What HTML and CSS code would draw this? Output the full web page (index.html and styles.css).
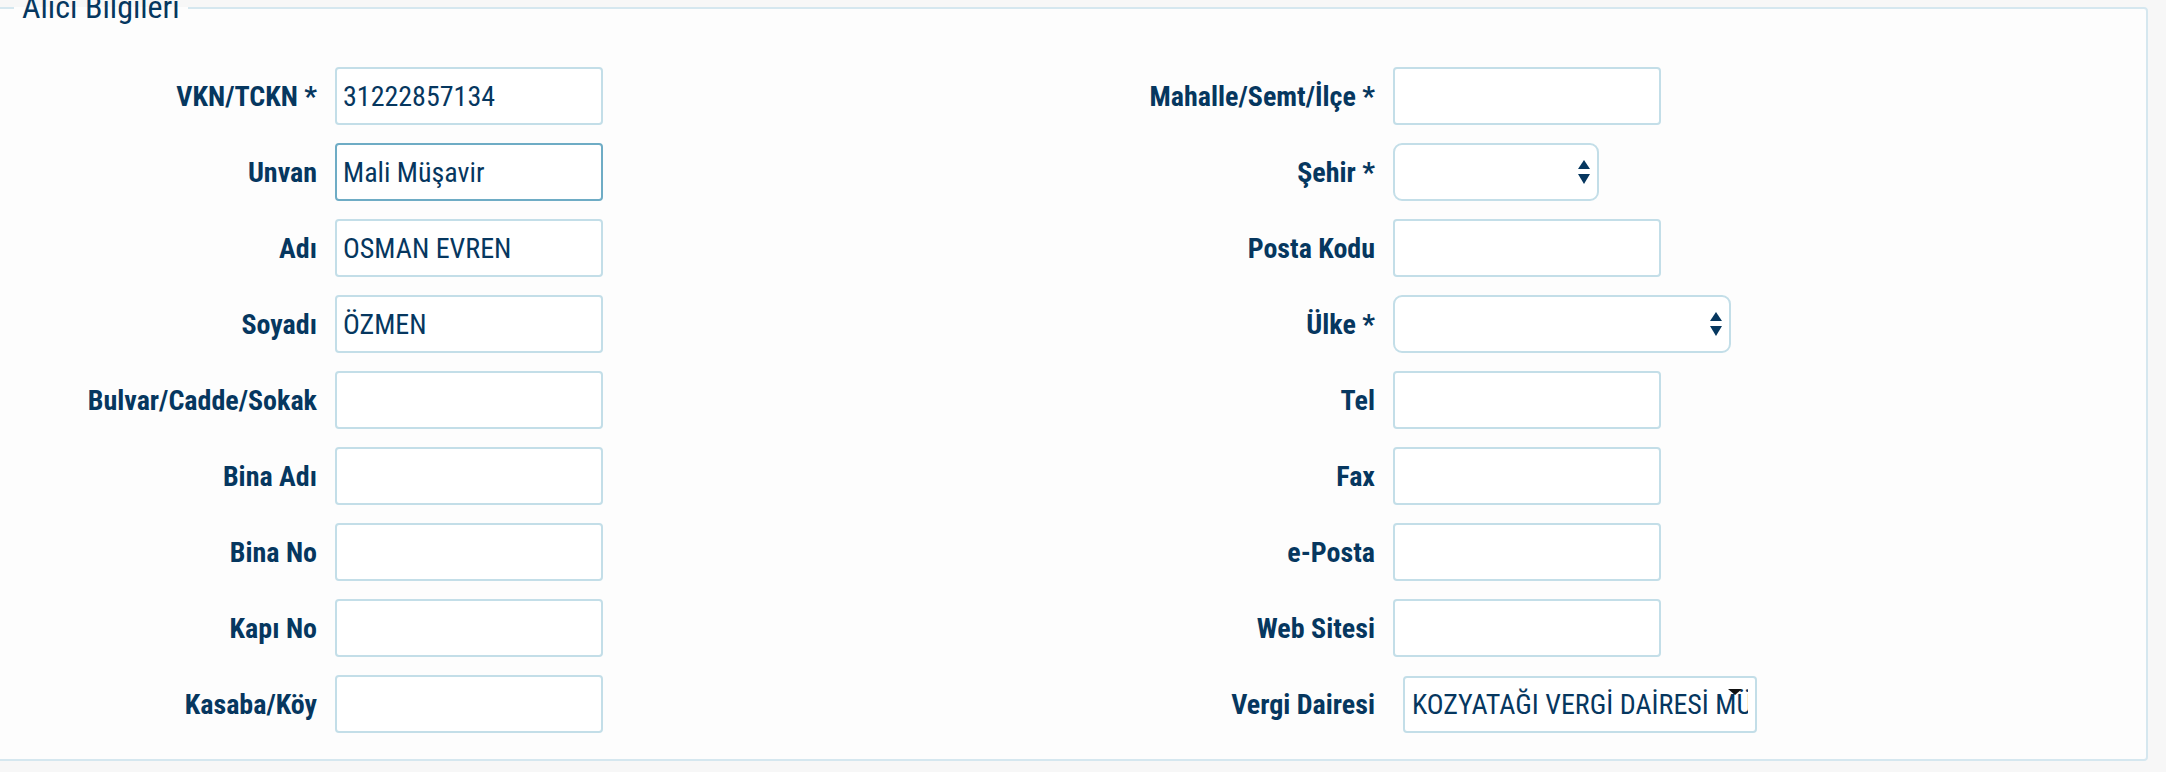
FILE: index.html
```html
<!DOCTYPE html>
<html lang="tr">
<head>
<meta charset="utf-8">
<title>Alıcı Bilgileri</title>
<link rel="stylesheet" href="styles.css">
</head>
<body>
<fieldset class="panel">
  <legend class="panel-title">Alıcı Bilgileri</legend>
  <div class="columns">
    <div class="col">
      <div class="row"><label class="lbl">VKN/TCKN *</label><input class="field" type="text" value="31222857134"></div>
      <div class="row"><label class="lbl">Unvan</label><input class="field is-focus" type="text" value="Mali Müşavir"></div>
      <div class="row"><label class="lbl">Adı</label><input class="field" type="text" value="OSMAN EVREN"></div>
      <div class="row"><label class="lbl">Soyadı</label><input class="field" type="text" value="ÖZMEN"></div>
      <div class="row"><label class="lbl">Bulvar/Cadde/Sokak</label><input class="field" type="text" value=""></div>
      <div class="row"><label class="lbl">Bina Adı</label><input class="field" type="text" value=""></div>
      <div class="row"><label class="lbl">Bina No</label><input class="field" type="text" value=""></div>
      <div class="row"><label class="lbl">Kapı No</label><input class="field" type="text" value=""></div>
      <div class="row"><label class="lbl">Kasaba/Köy</label><input class="field" type="text" value=""></div>
    </div>
    <div class="col">
      <div class="row"><label class="lbl">Mahalle/Semt/İlçe *</label><input class="field" type="text" value=""></div>
      <div class="row"><label class="lbl">Şehir *</label>
        <div class="select-wrap select-city">
          <select class="field select"><option></option></select>
          <svg class="select-arrows" width="12" height="24" viewBox="0 0 12 24" aria-hidden="true"><polygon points="0,9 6,0 12,9"/><polygon points="0,14 12,14 6,24"/></svg>
        </div>
      </div>
      <div class="row"><label class="lbl">Posta Kodu</label><input class="field" type="text" value=""></div>
      <div class="row"><label class="lbl">Ülke *</label>
        <div class="select-wrap select-country">
          <select class="field select"><option></option></select>
          <svg class="select-arrows" width="12" height="24" viewBox="0 0 12 24" aria-hidden="true"><polygon points="0,9 6,0 12,9"/><polygon points="0,14 12,14 6,24"/></svg>
        </div>
      </div>
      <div class="row"><label class="lbl">Tel</label><input class="field" type="text" value=""></div>
      <div class="row"><label class="lbl">Fax</label><input class="field" type="text" value=""></div>
      <div class="row"><label class="lbl">e-Posta</label><input class="field" type="text" value=""></div>
      <div class="row"><label class="lbl">Web Sitesi</label><input class="field" type="text" value=""></div>
      <div class="row"><label class="lbl">Vergi Dairesi</label>
        <div class="combo">
          <input class="field combo-input" type="text" value="KOZYATAĞI VERGİ DAİRESİ MÜDÜRLÜĞÜ">
          <svg class="combo-caret" width="14" height="6" viewBox="0 0 14 6" aria-hidden="true"><polygon points="0,0 14,0 7,6"/></svg>
        </div>
      </div>
    </div>
  </div>
</fieldset>
</body>
</html>
```

FILE: styles.css
```css
html, body {
  margin: 0;
  padding: 0;
}

body {
  background: #f7f7f7;
  color: #06375f;
  font-family: "Roboto Condensed", Roboto, "Liberation Sans", sans-serif;
  font-stretch: 87.5%;
}

.panel {
  margin: -10px 18px 0 -20px;
  padding: 42px 0 26px 32px;
  border: 2px solid #d5e7ef;
  border-radius: 4px;
  background: #fdfdfd;
  min-width: 0;
}

.panel-title {
  padding: 0 8px;
  font-size: 32px;
  line-height: 35px;
  font-weight: 400;
  color: #06375f;
}

.columns {
  display: flex;
}

.col {
  width: 1058px;
  display: flex;
  flex-direction: column;
  gap: 18px;
}

.row {
  display: flex;
  align-items: center;
  gap: 18px;
  height: 58px;
}

.lbl {
  flex: 0 0 303px;
  text-align: right;
  font-size: 28px;
  font-weight: 700;
  white-space: nowrap;
}

.field {
  box-sizing: border-box;
  width: 268px;
  height: 58px;
  margin: 0;
  padding: 0 6px;
  border: 2px solid #c3dee8;
  border-radius: 4px;
  background: #ffffff;
  color: #06375f;
  font-family: inherit;
  font-stretch: inherit;
  font-size: 28px;
  font-weight: 400;
  outline: none;
}

.field.is-focus {
  border-color: #6eacc5;
}

.select-wrap {
  position: relative;
}

.select {
  appearance: none;
  -webkit-appearance: none;
  border-radius: 9px;
  display: block;
}

.select-city .select {
  width: 206px;
}

.select-country .select {
  width: 338px;
}

.select-arrows {
  position: absolute;
  right: 9px;
  top: 17px;
  fill: #06375f;
  pointer-events: none;
}

.combo {
  position: relative;
  margin-left: 10px;
}

.combo-input {
  display: block;
  width: 354px;
  height: 57px;
  padding: 0 7px;
}

.combo-caret {
  position: absolute;
  right: 15px;
  top: 13px;
  fill: #111111;
  pointer-events: none;
}
```
